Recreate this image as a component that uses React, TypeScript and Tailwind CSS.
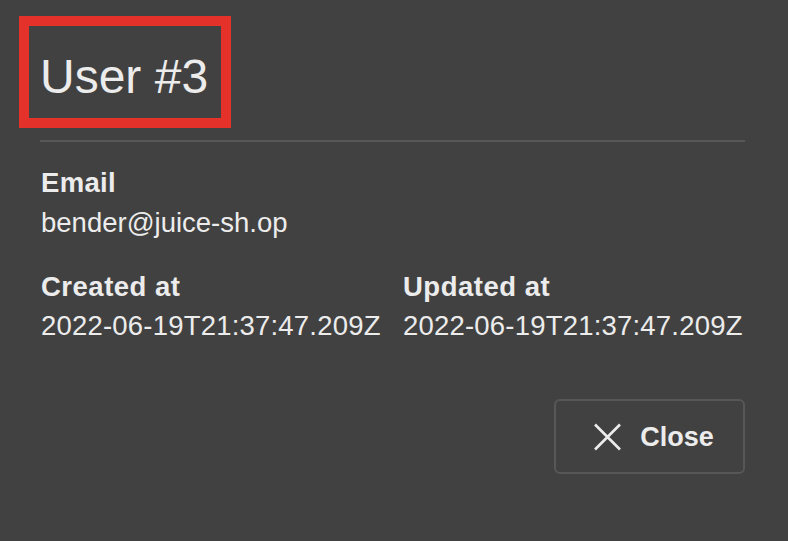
import React from "react";

export default function App() {
  return (
    <div
      className="w-[788px] h-[541px] bg-[#414141] text-[#ececec] overflow-hidden"
      style={{ fontFamily: '"Liberation Sans", Arial, sans-serif' }}
    >
      <div className="pt-[16px] pl-[19px]">
        <div className="inline-block border-[10px] border-[#e4322a] w-[212px] h-[112px] pl-[11px] pt-[27px]">
          <h1 className="text-[48px] leading-[48px] font-normal">User #3</h1>
        </div>
      </div>
      <div className="ml-[40px] mr-[43px] mt-[12px] h-[2px] bg-[#575757]" />
      <div className="pl-[41px] pr-[43px]">
        <div className="mt-[25px] flex flex-col gap-[8px]">
          <div className="text-[27.5px] leading-[32px] font-bold tracking-[0.3px]">Email</div>
          <div className="text-[27.5px] leading-[32px]">bender@juice-sh.op</div>
        </div>
        <div className="mt-[32px] flex">
          <div className="w-[362px] flex flex-col gap-[7px]">
            <div className="text-[27.5px] leading-[32px] font-bold tracking-[0.5px]">Created at</div>
            <div className="text-[27.5px] leading-[32px] tracking-[0.2px]">2022-06-19T21:37:47.209Z</div>
          </div>
          <div className="flex flex-col gap-[7px]">
            <div className="text-[27.5px] leading-[32px] font-bold tracking-[0.5px]">Updated at</div>
            <div className="text-[27.5px] leading-[32px] tracking-[0.2px]">2022-06-19T21:37:47.209Z</div>
          </div>
        </div>
        <div className="mt-[57px] flex justify-end">
          <button className="w-[191px] h-[75px] border-2 border-[#575757] rounded-[6px] flex items-center justify-center gap-[18px] pl-[8px]">
            <svg width="29" height="28" viewBox="0 0 29 28" fill="none">
              <path d="M2 1.5L27 26.5M27 1.5L2 26.5" stroke="#ececec" strokeWidth="2.6" />
            </svg>
            <span className="text-[27px] leading-[32px] font-bold">Close</span>
          </button>
        </div>
      </div>
    </div>
  );
}
